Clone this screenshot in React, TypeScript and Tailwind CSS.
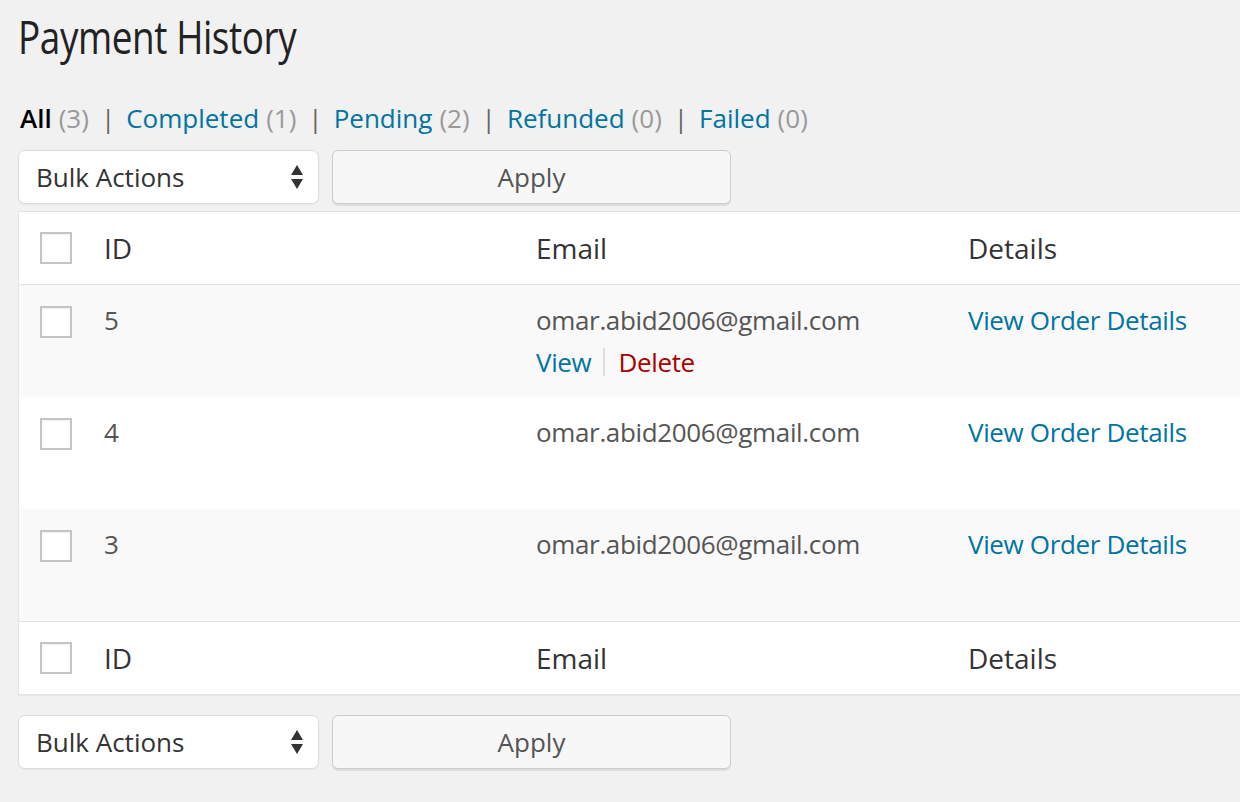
import React from "react";

type Payment = {
  id: number;
  email: string;
};

const payments: Payment[] = [
  { id: 5, email: "omar.abid2006@gmail.com" },
  { id: 4, email: "omar.abid2006@gmail.com" },
  { id: 3, email: "omar.abid2006@gmail.com" },
];

const filters = [
  { label: "All", count: 3, current: true },
  { label: "Completed", count: 1 },
  { label: "Pending", count: 2 },
  { label: "Refunded", count: 0 },
  { label: "Failed", count: 0 },
];

function Checkbox() {
  return (
    <span className="block h-[32px] w-[32px] border-2 border-[#c4c4c4] bg-white shadow-[inset_0_1px_2px_rgba(0,0,0,0.07)]" />
  );
}

function BulkBar() {
  return (
    <div className="flex items-center gap-[13px]">
      <div className="flex h-[54px] w-[301px] items-center justify-between rounded-[7px] border border-[#dcdcdc] bg-white pl-[17px] pr-[14px] shadow-[0_1px_1px_rgba(0,0,0,0.04)]">
        <span className="text-[26px] text-[#333]">Bulk Actions</span>
        <svg width="14" height="26" viewBox="0 0 14 26">
          <path d="M7 1 L13 11 L1 11 Z" fill="#333" />
          <path d="M1 15 L13 15 L7 25 Z" fill="#333" />
        </svg>
      </div>
      <button
        type="button"
        className="flex h-[54px] w-[399px] items-center justify-center rounded-[6px] border border-[#cccccc] bg-[#f7f7f7] text-[26px] text-[#555] shadow-[0_2px_0_#dedede]"
      >
        Apply
      </button>
    </div>
  );
}

function HeaderRow({ bordered }: { bordered: "top" | "bottom" }) {
  return (
    <div
      className={[
        "grid h-[73px] grid-cols-[85px_432px_432px_1fr] items-center bg-white text-[28px] text-[#333]",
        bordered === "bottom" ? "border-b border-[#e1e1e1]" : "border-t border-[#e1e1e1]",
      ].join(" ")}
    >
      <div className="pl-[21px]">
        <Checkbox />
      </div>
      <div>ID</div>
      <div>Email</div>
      <div>Details</div>
    </div>
  );
}

export default function App() {
  return (
    <div
      className="h-[802px] w-[1240px] overflow-hidden bg-[#f1f1f1] pl-[18px]"
      style={{ fontFamily: '"Open Sans", "Liberation Sans", sans-serif' }}
    >
      <h1 className="origin-left scale-x-[0.82] pt-[12px] text-[45px] leading-[50px] tracking-[-0.5px] text-[#222]">
        Payment History
      </h1>

      <ul className="mt-[38px] flex items-center pl-[2px] text-[26px] leading-[36px]">
        {filters.map((f, i) => (
          <li key={f.label} className="flex items-center">
            {i > 0 && <span className="ml-[12px] mr-[11px] text-[#666]">|</span>}
            <span className={f.current ? "font-semibold text-black" : "text-[#0074a2]"}>
              {f.label}
            </span>
            <span className="ml-[7px] text-[#999]">({f.count})</span>
          </li>
        ))}
      </ul>

      <div className="mt-[14px]">
        <BulkBar />
      </div>

      <div className="mt-[7px] w-[1300px] border border-[#e5e5e5] bg-white shadow-[0_1px_1px_rgba(0,0,0,0.04)]">
        <HeaderRow bordered="bottom" />
        {payments.map((p, i) => (
          <div
            key={p.id}
            className={[
              "grid h-[112px] grid-cols-[85px_432px_432px_1fr] text-[26px] leading-[36px] tracking-[-0.35px] text-[#555]",
              i % 2 === 0 ? "bg-[#f9f9f9]" : "bg-white",
            ].join(" ")}
          >
            <div className="pl-[21px] pt-[21px]">
              <Checkbox />
            </div>
            <div className="pt-[17px]">{p.id}</div>
            <div className="pt-[17px]">
              <div>{p.email}</div>
              {i === 0 && (
                <div className="mt-[6px] flex items-center">
                  <span className="text-[#0074a2]">View</span>
                  <span className="ml-[12px] mr-[13px] h-[28px] w-[2px] bg-[#ddd]" />
                  <span className="text-[#a00]">Delete</span>
                </div>
              )}
            </div>
            <div className="pt-[17px] text-[#0074a2]">View Order Details</div>
          </div>
        ))}
        <HeaderRow bordered="top" />
      </div>

      <div className="mt-[20px]">
        <BulkBar />
      </div>
    </div>
  );
}
